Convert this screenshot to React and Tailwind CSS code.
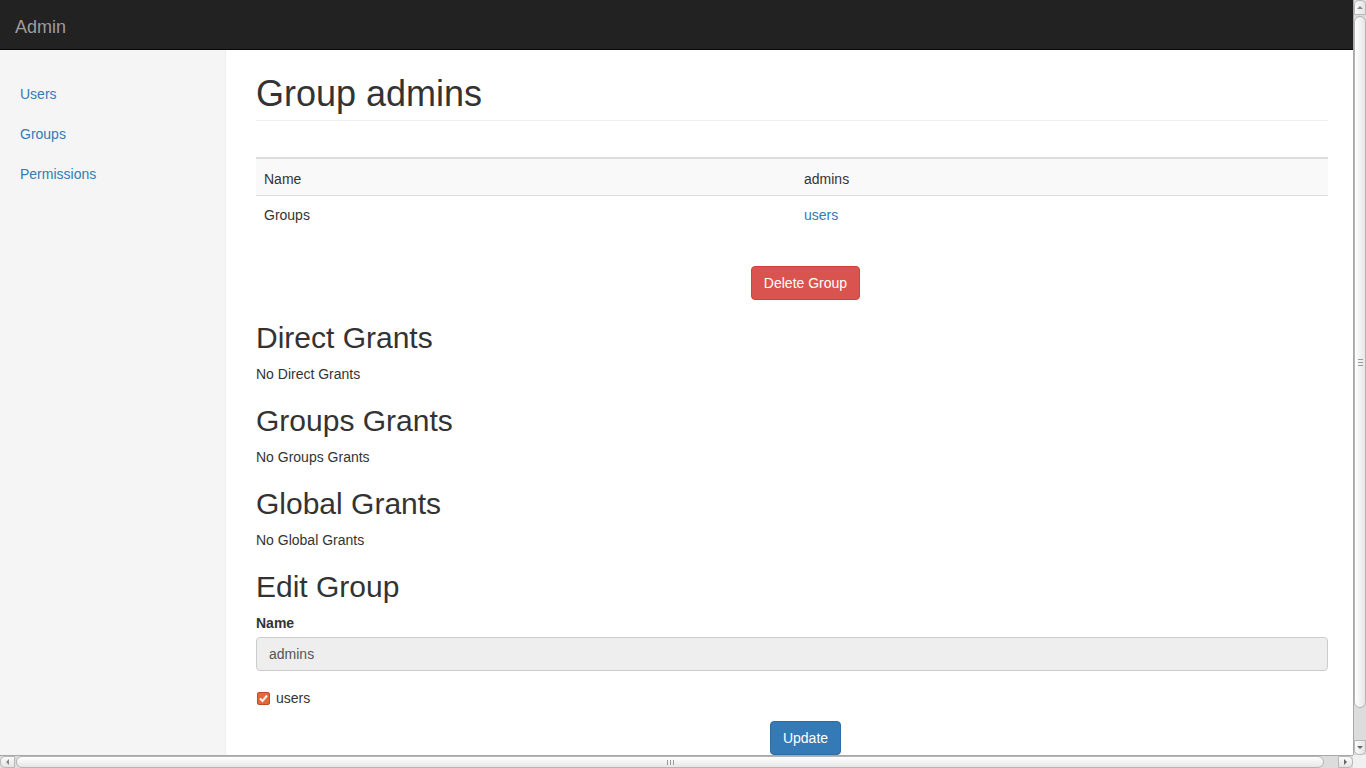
import React from "react";

const sections = [
  { title: "Direct Grants", empty: "No Direct Grants" },
  { title: "Groups Grants", empty: "No Groups Grants" },
  { title: "Global Grants", empty: "No Global Grants" },
];

function VScrollbar() {
  return (
    <div className="w-[13px] flex flex-col bg-[#dcdcdc] border-l border-[#a8a8a8]">
      {/* up arrow */}
      <div className="h-[15px] flex items-center justify-center bg-gradient-to-r from-[#fbfbfb] to-[#e4e4e4] border border-[#b8b8b8] rounded-t-[5px]">
        <div className="w-0 h-0 border-l-[3px] border-r-[3px] border-b-[3px] border-l-transparent border-r-transparent border-b-[#888]" />
      </div>
      {/* thumb */}
      <div className="h-[692px] mt-[1px] flex items-center justify-center bg-gradient-to-r from-[#ffffff] to-[#e6e6e6] border border-[#b4b4b4] rounded-[6px]">
        <div className="flex flex-col gap-[2px]">
          <div className="w-[5px] h-px bg-[#999]" />
          <div className="w-[5px] h-px bg-[#999]" />
          <div className="w-[5px] h-px bg-[#999]" />
        </div>
      </div>
      <div className="flex-1" />
      {/* down arrow */}
      <div className="h-[15px] flex items-center justify-center bg-gradient-to-r from-[#fbfbfb] to-[#e4e4e4] border border-[#b8b8b8] rounded-b-[5px]">
        <div className="w-0 h-0 border-l-[3px] border-r-[3px] border-t-[3px] border-l-transparent border-r-transparent border-t-[#666]" />
      </div>
    </div>
  );
}

function HScrollbar() {
  return (
    <div className="h-[13px] flex">
      <div className="flex-1 flex bg-[#dcdcdc] border-t border-[#a8a8a8]">
        <div className="w-[15px] flex items-center justify-center bg-gradient-to-b from-[#fbfbfb] to-[#e4e4e4] border border-[#b8b8b8] rounded-l-[5px]">
          <div className="w-0 h-0 border-t-[3px] border-b-[3px] border-r-[3px] border-t-transparent border-b-transparent border-r-[#888]" />
        </div>
        <div className="w-[1308px] ml-[1px] flex items-center justify-center bg-gradient-to-b from-[#ffffff] to-[#e6e6e6] border border-[#b4b4b4] rounded-[6px]">
          <div className="flex gap-[2px]">
            <div className="w-px h-[5px] bg-[#999]" />
            <div className="w-px h-[5px] bg-[#999]" />
            <div className="w-px h-[5px] bg-[#999]" />
          </div>
        </div>
        <div className="flex-1" />
        <div className="w-[15px] flex items-center justify-center bg-gradient-to-b from-[#fbfbfb] to-[#e4e4e4] border border-[#b8b8b8] rounded-r-[5px]">
          <div className="w-0 h-0 border-t-[3px] border-b-[3px] border-l-[3px] border-t-transparent border-b-transparent border-l-[#666]" />
        </div>
      </div>
      <div className="w-[13px] bg-[#f0f0f0]" />
    </div>
  );
}

export default function App() {
  return (
    <div
      className="w-[1366px] h-[768px] overflow-hidden flex flex-col bg-white text-[14px] text-[#333]"
      style={{ fontFamily: '"Liberation Sans", Arial, sans-serif' }}
    >
      <div className="flex-1 flex min-h-0">
        <div className="flex-1 flex flex-col min-w-0">
          {/* Navbar */}
          <div className="h-[50px] shrink-0 bg-[#222] border-b border-[#080808] flex items-center px-[15px]">
            <span className="text-[18px] leading-[20px] text-[#9d9d9d] mt-[5px]">Admin</span>
          </div>

          <div className="flex-1 flex min-h-0">
            {/* Sidebar */}
            <div className="w-[226px] shrink-0 bg-[#f5f5f5] border-r border-[#eee] pt-[24px]">
              {["Users", "Groups", "Permissions"].map((item) => (
                <a key={item} href="#" className="block px-[20px] py-[10px] leading-[20px] text-[#337ab7]">
                  {item}
                </a>
              ))}
            </div>

            {/* Main */}
            <div className="flex-1 pl-[30px] pr-[25px] pt-[24px] overflow-hidden">
              <div className="pb-[6px] border-b border-[#eee] mb-[36px]">
                <h1 className="text-[36px] leading-[40px] font-medium">Group admins</h1>
              </div>

              <table className="w-full border-collapse">
                <tbody>
                  <tr className="bg-[#f9f9f9] border-t-2 border-[#ddd]">
                    <td className="w-[540px] px-[8px] pt-[10px] pb-[6px] leading-[20px]">Name</td>
                    <td className="px-[8px] pt-[10px] pb-[6px] leading-[20px]">admins</td>
                  </tr>
                  <tr className="border-t border-[#ddd]">
                    <td className="px-[8px] pt-[9px] pb-[7px] leading-[20px]">Groups</td>
                    <td className="px-[8px] pt-[9px] pb-[7px] leading-[20px]">
                      <a href="#" className="text-[#337ab7]">users</a>
                    </td>
                  </tr>
                </tbody>
              </table>

              <div className="flex justify-center pl-[27px] mt-[34px]">
                <button className="h-[34px] px-[12px] bg-[#d9534f] border border-[#d43f3a] rounded-[4px] text-white leading-[20px]">
                  Delete Group
                </button>
              </div>

              <div className="pt-[1px]">
                {sections.map((s) => (
                  <div key={s.title}>
                    <h2 className="text-[30px] leading-[33px] font-medium mt-[20px] mb-[10px]">{s.title}</h2>
                    <p className="leading-[20px]">{s.empty}</p>
                  </div>
                ))}

                <h2 className="text-[30px] leading-[33px] font-medium mt-[20px] mb-[10px]">Edit Group</h2>
                <div className="mb-[15px]">
                  <label className="block font-bold leading-[20px] mb-[4px]">Name</label>
                  <div className="h-[34px] px-[12px] flex items-center bg-[#eee] border border-[#ccc] rounded-[4px] text-[#555]">
                    admins
                  </div>
                </div>
                <div className="flex items-center gap-[6px] pl-[1px] pt-[2px] leading-[20px]">
                  <span className="w-[13px] h-[13px] rounded-[2px] bg-[#e2683c] border border-[#b8502c] flex items-center justify-center">
                    <svg width="11" height="11" viewBox="0 0 11 11">
                      <path d="M2 5.5 L4.5 8 L9 2.5" fill="none" stroke="#f4f4f4" strokeWidth="2" />
                    </svg>
                  </span>
                  <span>users</span>
                </div>
                <div className="flex justify-center pl-[27px] mt-[13px]">
                  <button className="h-[34px] px-[12px] bg-[#337ab7] border border-[#2e6da4] rounded-[4px] text-white leading-[20px]">
                    Update
                  </button>
                </div>
              </div>
            </div>
          </div>
        </div>
        <VScrollbar />
      </div>
      <HScrollbar />
    </div>
  );
}
